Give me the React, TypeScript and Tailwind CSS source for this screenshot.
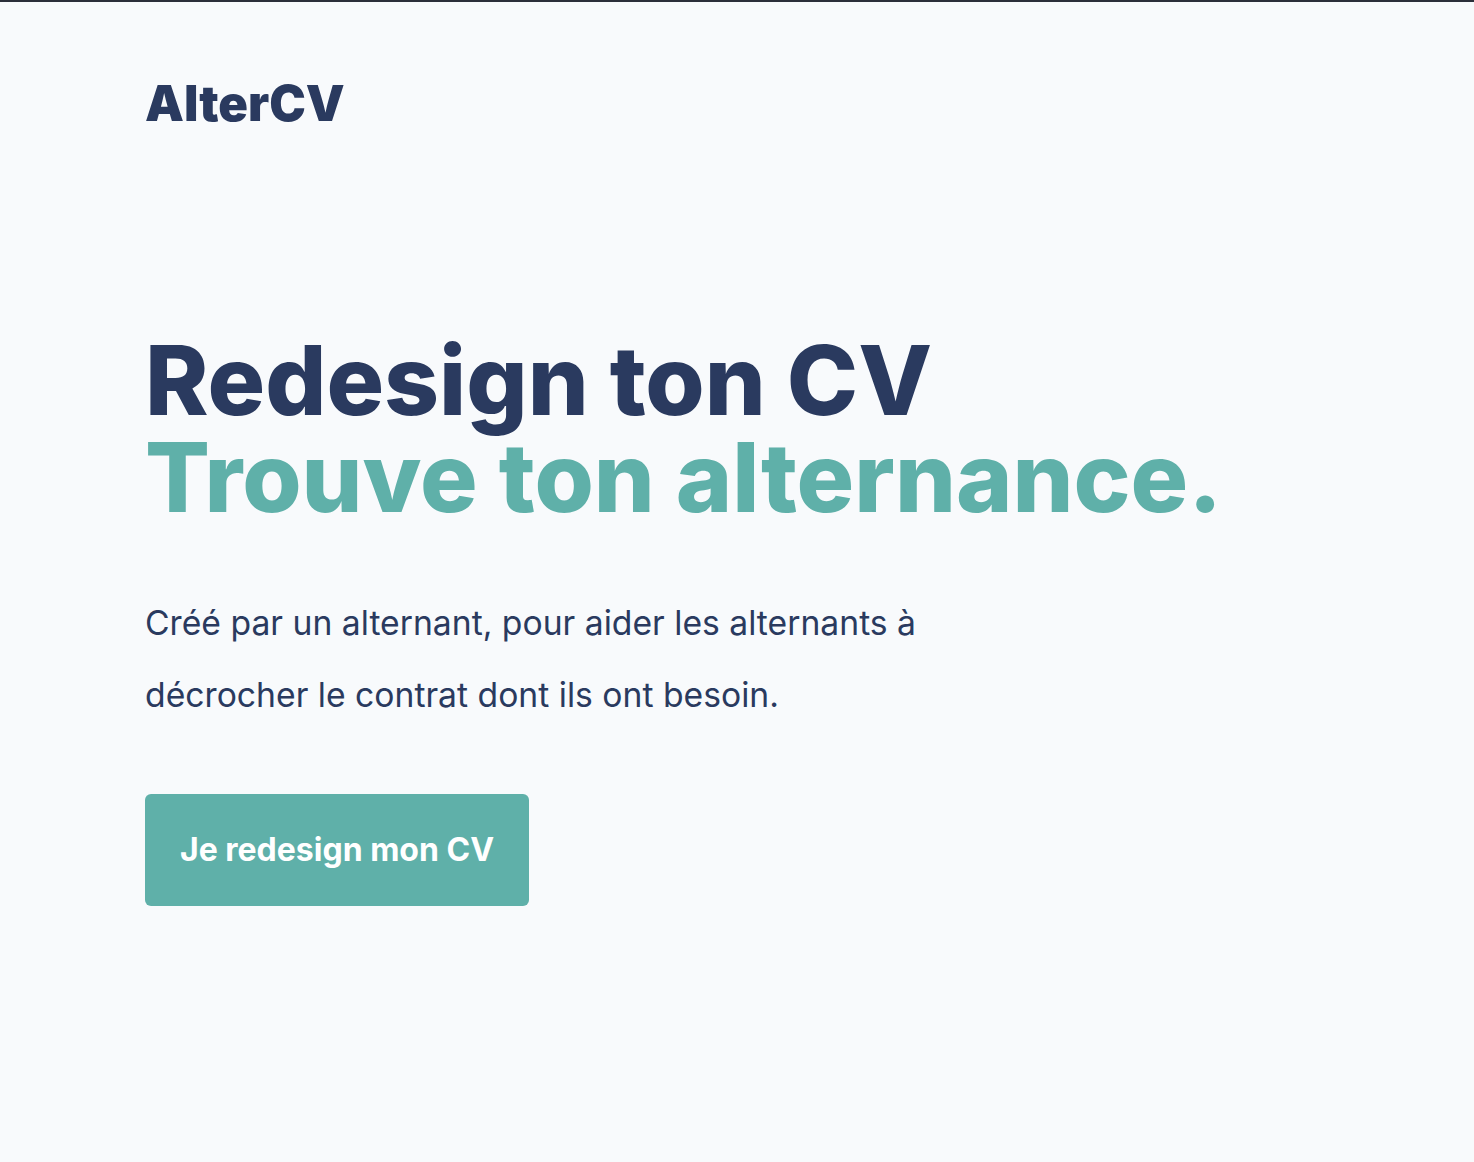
export default function App() {
  return (
    <div
      className="min-h-[1162px] bg-[#f8fafc] border-t-2 border-[#2b2f3a] text-[#2a3a5f]"
      style={{ fontFamily: 'Inter, "Noto Sans", sans-serif' }}
    >
      <div className="px-[145px]">
        {/* Header */}
        <header className="pt-[74px]">
          <div className="text-[49px] leading-[56px] font-black">AlterCV</div>
        </header>

        {/* Hero */}
        <section className="pt-[200px]">
          <h1 className="text-[96px] leading-[97px] font-extrabold">
            Redesign ton CV
            <br />
            <span className="text-[#5fb0a9]">Trouve ton alternance.</span>
          </h1>

          <p className="mt-[61px] max-w-[820px] text-[33.7px] leading-[72px]">
            Créé par un alternant, pour aider les alternants à décrocher le contrat dont ils ont besoin.
          </p>

          <button className="mt-[63px] w-[384px] h-[112px] rounded-md bg-[#5fb0a9] text-white text-[32px] font-bold">
            Je redesign mon CV
          </button>
        </section>
      </div>
    </div>
  );
}
